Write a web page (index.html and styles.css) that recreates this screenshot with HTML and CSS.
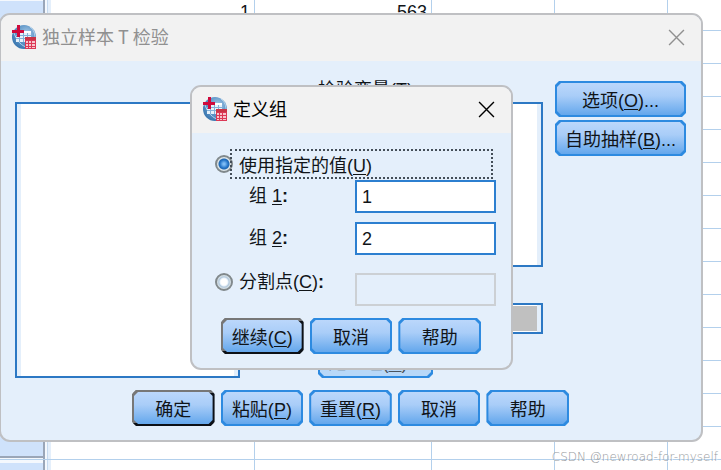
FILE: index.html
```
<!DOCTYPE html>
<html lang="zh-CN">
<head>
<meta charset="utf-8">
<title>独立样本 T 检验</title>
<link rel="stylesheet" href="styles.css">
</head>
<body>
<svg class="defs" aria-hidden="true">
  <defs>
    <radialGradient id="globe" cx="0.6" cy="0.35" r="0.75">
      <stop offset="0" stop-color="#a9cbe8"/>
      <stop offset="0.55" stop-color="#5b93c6"/>
      <stop offset="1" stop-color="#2f6da8"/>
    </radialGradient>
    <symbol id="app-icon" viewBox="0 0 24 24">
      <circle cx="12" cy="12" r="12" fill="url(#globe)"/>
      <path d="M2 8C5 16 9 21 17 23M18 2C22 5 23 9 23 13" fill="none" stroke="#b9d5ec" stroke-width="1"/>
      <path d="M8 6h11v11H4v-5h4z" fill="#e6f1fa"/>
      <path d="M8 6h11v2H8z" fill="#fff"/>
      <path d="M4 10.500h15M4 13.500h10M7.500 12v5M11.500 8v9M15.500 8v5" stroke="#83b0d8" stroke-width="1"/>
      <path d="M5 0h3v5h4v3H8v4H5V8H0V5h5z" fill="#cf0a3c"/>
      <path d="M13 12h11v12H13z" fill="#dc3855"/>
      <path d="M13 12h11v3H13z" fill="#c93446"/>
      <path d="M14 16h2v2h-2zM17 16h2v2h-2zM20 16h3v2h-3zM14 19h2v2h-2zM17 19h2v2h-2zM20 19h3v2h-3zM14 22h2v1h-2zM17 22h2v1h-2zM20 22h3v1h-3z" fill="#f7c5cd"/>
    </symbol>
  </defs>
</svg>

<table class="sheet">
  <colgroup><col class="c-head"><col class="c-a"><col class="c-b"><col class="c-c"><col class="c-d"><col></colgroup>
  <tbody>
    <tr><th scope="row"></th><td>1</td><td>563</td><td></td><td></td><td></td></tr>
    <tr><th scope="row"></th><td></td><td></td><td></td><td></td><td></td></tr>
    <tr><th scope="row"></th><td></td><td></td><td></td><td></td><td></td></tr>
    <tr><th scope="row"></th><td></td><td></td><td></td><td></td><td></td></tr>
    <tr><th scope="row"></th><td></td><td></td><td></td><td></td><td></td></tr>
    <tr><th scope="row"></th><td></td><td></td><td></td><td></td><td></td></tr>
    <tr><th scope="row"></th><td></td><td></td><td></td><td></td><td></td></tr>
    <tr><th scope="row"></th><td></td><td></td><td></td><td></td><td></td></tr>
    <tr><th scope="row"></th><td></td><td></td><td></td><td></td><td></td></tr>
    <tr><th scope="row"></th><td></td><td></td><td></td><td></td><td></td></tr>
    <tr><th scope="row"></th><td></td><td></td><td></td><td></td><td></td></tr>
    <tr><th scope="row"></th><td></td><td></td><td></td><td></td><td></td></tr>
    <tr><th scope="row"></th><td></td><td></td><td></td><td></td><td></td></tr>
    <tr><th scope="row"></th><td></td><td></td><td></td><td></td><td></td></tr>
    <tr><th scope="row"></th><td></td><td></td><td></td><td></td><td></td></tr>
  </tbody>
</table>

<section class="dialog dialog-main" aria-labelledby="main-title">
  <header class="titlebar titlebar-inactive">
    <svg class="app-icon"><use href="#app-icon"/></svg>
    <h1 id="main-title">独立样本 T 检验</h1>
    <button class="close" aria-label="关闭"><svg viewBox="0 0 16 16"><path d="M1 1l14 14M15 1L1 15"/></svg></button>
  </header>
  <div class="main-body">
    <div class="main-grid">
      <div class="box source-list"></div>
      <div class="targets">
        <span class="target-label">检验变量(<u>T</u>):</span>
        <div class="box test-list"></div>
        <div class="box group-var"><div class="group-value"></div></div>
        <button class="btn define" disabled><span>定义组(<u>D</u>)...</span></button>
      </div>
      <div class="side">
        <button class="btn"><span>选项(<u>O</u>)...</span></button>
        <button class="btn"><span>自助抽样(<u>B</u>)...</span></button>
      </div>
    </div>
    <footer class="actions main-actions">
      <button class="btn btn-default"><span>确定</span></button>
      <button class="btn"><span>粘贴(<u>P</u>)</span></button>
      <button class="btn"><span>重置(<u>R</u>)</span></button>
      <button class="btn"><span>取消</span></button>
      <button class="btn"><span>帮助</span></button>
    </footer>
  </div>
</section>

<section class="dialog dialog-groups" role="dialog" aria-labelledby="groups-title">
  <header class="titlebar">
    <svg class="app-icon"><use href="#app-icon"/></svg>
    <h2 id="groups-title">定义组</h2>
    <button class="close" aria-label="关闭"><svg viewBox="0 0 16 16"><path d="M1 1l14 14M15 1L1 15"/></svg></button>
  </header>
  <form class="groups-body">
    <div class="option">
      <input type="radio" name="mode" id="use-values" checked>
      <label for="use-values" class="focus">使用指定的值(<u>U</u>)</label>
    </div>
    <div class="fields">
      <label class="indent" for="g1">组 <u>1</u><b>:</b></label>
      <input type="text" id="g1" value="1">
      <label class="indent" for="g2">组 <u>2</u><b>:</b></label>
      <input type="text" id="g2" value="2">
    </div>
    <div class="fields">
      <div class="option">
        <input type="radio" name="mode" id="cut">
        <label for="cut">分割点(<u>C</u>)<b>:</b></label>
      </div>
      <input type="text" aria-label="分割点" disabled>
    </div>
    <footer class="actions group-actions">
      <button type="button" class="btn btn-default"><span>继续(<u>C</u>)</span></button>
      <button type="button" class="btn"><span>取消</span></button>
      <button type="button" class="btn"><span>帮助</span></button>
    </footer>
  </form>
</section>

<div class="watermark">CSDN @newroad-for-myself</div>
</body>
</html>
```
FILE: styles.css
```
* { box-sizing: border-box; }

html { height: 100%; }

body {
  position: relative;
  height: 100%;
  margin: 0;
  overflow: hidden;
  background: #fff;
  color: #101418;
  font: 18px/22px "Liberation Sans", "Noto Sans CJK SC", sans-serif;
}

.defs { position: absolute; width: 0; height: 0; }

u { text-decoration-thickness: 1px; text-underline-offset: 2px; }

/* Data sheet behind the dialogs */
.sheet {
  width: 100%;
  margin-top: -2px;
  table-layout: fixed;
  border-collapse: separate;
  border-spacing: 0;
}
.c-head { width: 51px; }
.c-a { width: 204px; }
.c-b { width: 177px; }
.c-c { width: 123px; }
.c-d { width: 113px; }
.sheet th, .sheet td {
  height: 33px;
  padding: 3px 4px 0 0;
  border-bottom: 1px solid #b3d0ec;
  text-align: right;
  vertical-align: top;
  line-height: 22px;
}
.sheet td { border-right: 1px solid #b3d0ec; }
.sheet td:last-child { border-right: 0; }
.sheet th {
  background:
    linear-gradient(90deg, transparent 43px, #9aa6b8 43px 45px, #f4f8fd 45px 47px, #c6daf0 47px 48px, #e4effb 48px),
    linear-gradient(#f4f8fd 3px, #cfe2fb 3px 29px, #9aa6b8 29px 31px, #f4f8fd 31px);
}

/* Dialog frame */
.dialog {
  position: absolute;
  overflow: hidden;
  border: 2px solid #bfc0c3;
  border-radius: 11px;
  background: #e4effb;
}
.dialog-main { top: 13px; left: -1px; right: 18px; }
.dialog-groups { top: 85px; left: 190px; width: 323px; }

.titlebar {
  display: flex;
  align-items: center;
  gap: 6px;
  height: 46px;
  padding: 0 16px 2px 11px;
  background: #f2f2f2;
  color: #000;
}
.titlebar h1, .titlebar h2 {
  flex: 1;
  margin: 0;
  padding-bottom: 2px;
  font: 18px/24px "Noto Sans CJK SC", sans-serif;
}
.titlebar-inactive { color: #909090; }
.app-icon { width: 24px; height: 24px; }
.close {
  display: flex;
  padding: 0;
  border: 0;
  background: none;
  color: inherit;
}
.close svg { width: 17px; height: 17px; fill: none; stroke: currentColor; stroke-width: 1.3; }

/* Buttons with cut corners */
.btn {
  --edge: #2d8ae0;
  --cut: polygon(4px 0, calc(100% - 4px) 0, 100% 4px, 100% calc(100% - 4px), calc(100% - 4px) 100%, 4px 100%, 0 calc(100% - 4px), 0 4px);
  position: relative;
  isolation: isolate;
  height: 36px;
  padding: 4px 0 0;
  border: 0;
  background: var(--edge);
  clip-path: var(--cut);
  color: #101418;
  font: inherit;
  white-space: nowrap;
}
.btn::before {
  content: "";
  position: absolute;
  z-index: -1;
  inset: 2px;
  background: linear-gradient(#bbd7fb, #a9cdf8 40%, #64a7ec);
  clip-path: var(--cut);
}
.btn-default { --edge: linear-gradient(to top right, #777 2px, transparent 2px), linear-gradient(#777 3px, transparent 3px), linear-gradient(#0c1016, #0c1016) 0 100% / 100% 3px no-repeat, linear-gradient(90deg, #777 50%, #0c1016 50%); }
.btn:disabled { color: #4a545e; }
.btn:disabled::before { background: #b8d8f8; }

.actions { display: grid; gap: 6px; }

/* Main dialog */
.main-body { padding: 20px 15px 14px 14px; }
.main-grid {
  display: grid;
  grid-template-columns: 225px 1fr 131px;
  column-gap: 12px;
}
.box {
  border: 2px solid #2c78c4;
  background: linear-gradient(90deg, #e4effb 4px, #fff 4px calc(100% - 4px), #e4effb calc(100% - 4px));
}
.source-list { height: 276px; margin-top: 21px; }
.targets {
  display: flex;
  flex-direction: column;
  align-items: flex-start;
  padding-left: 66px;
}
.target-label { height: 21px; line-height: 18px; }
.test-list { width: 100%; height: 165px; }
.group-var { width: 100%; height: 31px; margin: 36px 0 8px; padding: 1px 4px; }
.group-value { height: 100%; background: #c0c0c0; }
.define { width: 115px; padding-top: 6px; }
.side { display: grid; align-content: start; gap: 3px; }
.main-actions { grid-template-columns: repeat(5, 1fr); width: 437px; margin: 12px 0 0 117px; }

/* Group definition dialog */
.groups-body { padding: 16px 15px 14px 23px; }
.option { display: flex; align-items: center; }
.option label { padding-left: 6px; }
.option .focus {
  flex: 1;
  height: 30px;
  margin: 0 3px 0 -3px;
  padding: 4px 0 0 7px;
  border: 2px dotted #444e58;
}
input[type="radio"] {
  appearance: none;
  flex: none;
  width: 18px;
  height: 18px;
  margin: 0;
  border: 2px solid #81898c;
  border-radius: 50%;
  background: radial-gradient(circle, #fff 3px, #e8f2fb 4px, #b4cadd 5px, #dde5e8 7px);
}
input[type="radio"]:checked {
  background: radial-gradient(circle, #7dbcf5 1px, #2474c8 4px, #2169b4 5px, #dde5e8 6px);
}
.fields {
  display: grid;
  grid-template-columns: 1fr 141px;
  align-items: center;
  row-gap: 9px;
  margin-top: 1px;
}
.fields + .fields { margin-top: 16px; }
.fields .option { align-self: start; }
.fields .option + input { margin-top: 2px; }
.fields .indent { padding: 0 0 2px 34px; }
input[type="text"] {
  width: 100%;
  height: 33px;
  padding: 2px 5px 0;
  border: 2px solid #2c7fd0;
  background: #fff;
  color: inherit;
  font: inherit;
}
input[type="text"]:disabled { border-color: #ccd0d4; background: transparent; }
.group-actions { grid-template-columns: repeat(3, 1fr); width: 260px; margin: 12px 0 0 6px; }

.watermark {
  position: absolute;
  right: 3px;
  bottom: 4px;
  color: #96999d;
  font: 12px/18px "DejaVu Sans", sans-serif;
  font-weight: 200;
  text-shadow: 1px 1px #fff;
}
```
